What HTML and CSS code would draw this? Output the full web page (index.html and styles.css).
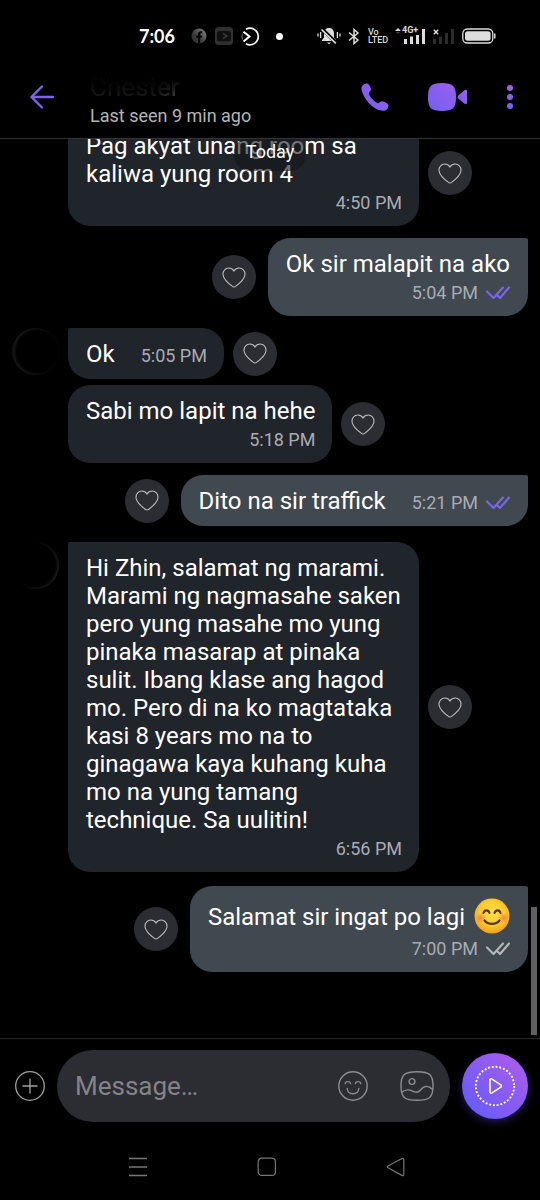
FILE: index.html
```html
<!DOCTYPE html>
<html lang="tl">
<head>
<meta charset="utf-8">
<meta name="viewport" content="width=device-width, initial-scale=1">
<title>Chat</title>
<link rel="stylesheet" href="styles.css">
</head>
<body>
<svg class="defs" aria-hidden="true">
  <defs>
    <linearGradient id="violet" x1="0" y1="1" x2="1" y2="0">
      <stop offset="0" stop-color="#7360f2"/><stop offset="1" stop-color="#9a5fea"/>
    </linearGradient>
    <linearGradient id="dots" gradientUnits="userSpaceOnUse" x1="0" y1="26" x2="0" y2="0">
      <stop offset="0" stop-color="#7360f2"/><stop offset="1" stop-color="#a062e0"/>
    </linearGradient>
    <linearGradient id="fade" x1="1" y1="0" x2="0" y2="1">
      <stop offset="0" stop-color="#8a8a8a"/><stop offset=".6" stop-color="#3c3c3c"/><stop offset="1" stop-color="#2c2c2c"/>
    </linearGradient>
    <radialGradient id="face" cx=".5" cy=".4" r=".6">
      <stop offset="0" stop-color="#ffe14a"/><stop offset=".6" stop-color="#fdc92f"/><stop offset="1" stop-color="#f0a11e"/>
    </radialGradient>
    <radialGradient id="cheek">
      <stop offset="0" stop-color="#f4764e" stop-opacity=".8"/><stop offset="1" stop-color="#f4764e" stop-opacity="0"/>
    </radialGradient>
    <symbol id="heart" viewBox="0 0 24 21">
      <path d="M12 20C10.600 20 1 12.800 1 7.200C1 3.700 3.500 1 6.700 1C9 1 11 2.200 12 4C13 2.200 15 1 17.300 1C20.500 1 23 3.700 23 7.200C23 12.800 13.400 20 12 20Z" fill="none" stroke="#b9bbbe" stroke-width="1.100"/>
    </symbol>
    <symbol id="ticks" viewBox="0 0 24 14">
      <path d="M1 5.500L7.500 12L17 1.500M11.500 9.500L14 12L23 1.500" fill="none" stroke="currentColor" stroke-width="2.100" stroke-linecap="round" stroke-linejoin="round"/>
    </symbol>
  </defs>
</svg>

<header class="header">
  <div class="status">
    <div class="status-left">
      <span class="clock">7:06</span>
      <svg width="16" height="16" viewBox="0 0 16 16"><circle cx="8" cy="8" r="7.500" fill="url(#fade)"/><path d="M7 15.500V9.800H5.200V7.600H7V6C7 4.200 8 3.200 9.800 3.200H11.200V5.200H10.200C9.400 5.200 9.200 5.600 9.200 6.300V7.600H11.200L10.900 9.800H9.200V15.500Z" fill="#080808"/></svg>
      <svg width="18" height="18" viewBox="0 0 18 18"><rect width="18" height="18" rx="4" fill="#303030"/><rect x="2" y="4" width="14" height="10.500" rx="3" fill="#101010"/><path d="M8 6.500L12 9L8 11.500" fill="none" stroke="#383838" stroke-width="1.500"/></svg>
      <svg width="19" height="19" viewBox="0 0 19 19" fill="none" stroke="#fff" stroke-width="1.700"><path d="M5 2.200A8.300 8.300 0 1 1 5 16.800"/><path d="M2.500 4.700L8.500 9.500L2.500 14.500" stroke-width="2"/><path d="M1.500 6.500A8.300 8.300 0 0 0 1.500 12.500" stroke="#777" stroke-width="1"/></svg>
      <span class="status-dot"></span>
    </div>
    <div class="status-right">
      <svg width="24" height="18" viewBox="0 0 24 18"><path d="M12 1C8.500 1 7 3.500 7 6.500V10.500L5 13V14H19V13L17 10.500V6.500C17 3.500 15.500 1 12 1Z" fill="#ddd"/><path d="M10 15.500H14L12 17.200Z" fill="#ddd"/><path d="M4 1L20 16.500" stroke="#000" stroke-width="3.500"/><path d="M4.500 2.500L18.800 16.300" stroke="#ddd" stroke-width="1.700"/><path d="M1 6.500V9.500M3.600 5V11M20.400 5V11M23 6.500V9.500" stroke="#ddd" stroke-width="1.300"/></svg>
      <svg width="12" height="17" viewBox="0 0 12 17"><path d="M1 4.500L10 12L6 15.500V1.500L10 5L1 12.500" fill="none" stroke="#ddd" stroke-width="1.500"/></svg>
      <span class="volte"><span>Vo</span><span>LTED</span></span>
      <span class="signal">
        <span class="network">4G+</span>
        <svg width="31" height="18" viewBox="0 0 31 18" fill="#ddd"><path d="M0 4L3 1L6 4Z"/><path d="M1 5H5L3 7Z" fill="#444"/><rect x="9" y="12" width="3" height="5"/><rect x="15" y="9.500" width="3" height="7.500"/><rect x="21" y="8" width="3" height="9"/><rect x="27" y="2" width="3" height="15"/></svg>
      </span>
      <svg width="22" height="18" viewBox="0 0 22 18"><path d="M.8 2.800L5.200 7.200M5.200 2.800L.8 7.200" stroke="#ddd" stroke-width="1.500"/><g fill="#2c2c2c"><rect x="0" y="12" width="3" height="5"/><rect x="6" y="9.500" width="3" height="7.500"/><rect x="12" y="6" width="3" height="11"/><rect x="18" y="2" width="3" height="15"/></g></svg>
      <svg width="34" height="16" viewBox="0 0 34 16"><rect x=".8" y="1" width="30" height="14" rx="4.500" fill="none" stroke="#ddd" stroke-width="1.300"/><rect x="3" y="3.200" width="25.600" height="9.600" rx="2.500" fill="#ddd"/><path d="M32.800 5.500V10.500" stroke="#ddd" stroke-width="1.400"/></svg>
    </div>
  </div>
  <div class="appbar">
    <button class="icon-button" aria-label="Back"><svg width="24" height="24" viewBox="0 0 24 24" fill="none" stroke="#7d63ea" stroke-width="2.400" stroke-linecap="round" stroke-linejoin="round"><path d="M23 12H1.500M12 1.500L1.500 12L12 22.500"/></svg></button>
    <div class="contact">
      <h1 class="contact-name">Chester</h1>
      <p class="contact-seen">Last seen 9 min ago</p>
    </div>
    <div class="actions">
      <button class="icon-button" aria-label="Voice call"><svg width="28" height="28" viewBox="0 0 28 28"><path d="M1.500 2.500C3 .8 5.500 0 7 .8C8.300 1.500 9.600 4.500 10 6.300C10.300 7.800 8 9.200 7.800 10.500C7.600 12.500 13.500 19.300 16.500 20.300C18 20.800 19.500 18.200 21 18.200C22.500 18.200 25.800 20 27 21.300C28.300 22.800 26.500 27 24 27.500C15 29.500 3 17.500 .6 7C.2 5.200 .4 3.700 1.500 2.500Z" fill="url(#violet)"/></svg></button>
      <button class="icon-button" aria-label="Video call"><svg width="40" height="28" viewBox="0 0 40 28" fill="url(#violet)"><path d="M14 0C25 0 28 3 28 14C28 25 25 28 14 28C3 28 0 25 0 14C0 3 3 0 14 0Z"/><path d="M30.500 12.300L36.500 7.300C38 6.300 39 7 39 8.500V19.500C39 21 38 21.700 36.500 20.700L30.500 15.700C29.400 14.700 29.400 13.300 30.500 12.300Z"/></svg></button>
      <button class="icon-button" aria-label="More options"><svg width="6" height="26" viewBox="0 0 6 26" fill="url(#dots)"><circle cx="3" cy="4" r="3"/><circle cx="3" cy="13" r="3"/><circle cx="3" cy="22" r="3"/></svg></button>
    </div>
  </div>
</header>

<main class="chat">
  <span class="day">Today</span>

  <div class="row in">
    <span class="slot"></span>
    <div class="bubble"><p>Pag akyat unang room sa kaliwa yung room 4</p><span class="meta">4:50 PM</span></div>
    <button class="like" aria-label="Like"><svg width="24" height="21"><use href="#heart"/></svg></button>
  </div>

  <div class="row out first">
    <button class="like" aria-label="Like"><svg width="24" height="21"><use href="#heart"/></svg></button>
    <div class="bubble"><p>Ok sir malapit na ako</p><span class="meta">5:04 PM <svg class="seen" width="24" height="14"><use href="#ticks"/></svg></span></div>
  </div>

  <div class="row in first">
    <span class="slot avatar"></span>
    <div class="bubble short"><p>Ok</p><span class="meta">5:05 PM</span></div>
    <button class="like" aria-label="Like"><svg width="24" height="21"><use href="#heart"/></svg></button>
  </div>

  <div class="row in">
    <span class="slot"></span>
    <div class="bubble"><p>Sabi mo lapit na hehe</p><span class="meta">5:18 PM</span></div>
    <button class="like" aria-label="Like"><svg width="24" height="21"><use href="#heart"/></svg></button>
  </div>

  <div class="row out first">
    <button class="like" aria-label="Like"><svg width="24" height="21"><use href="#heart"/></svg></button>
    <div class="bubble short"><p>Dito na sir traffick</p><span class="meta">5:21 PM <svg class="seen" width="24" height="14"><use href="#ticks"/></svg></span></div>
  </div>

  <div class="row in first long">
    <span class="slot avatar right-lit"></span>
    <div class="bubble"><p>Hi Zhin, salamat ng marami. Marami ng nagmasahe saken pero yung masahe mo yung pinaka masarap at pinaka sulit. Ibang klase ang hagod mo. Pero di na ko magtataka kasi 8 years mo na to ginagawa kaya kuhang kuha mo na yung tamang technique. Sa uulitin!</p><span class="meta">6:56 PM</span></div>
    <button class="like" aria-label="Like"><svg width="24" height="21"><use href="#heart"/></svg></button>
  </div>

  <div class="row out first">
    <button class="like" aria-label="Like"><svg width="24" height="21"><use href="#heart"/></svg></button>
    <div class="bubble"><p>Salamat sir ingat po lagi <svg class="emoji" role="img" aria-label="Smiling face" width="36" height="36" viewBox="0 0 36 36"><circle cx="18" cy="18" r="17.500" fill="url(#face)"/><circle cx="6.500" cy="20" r="5.500" fill="url(#cheek)"/><circle cx="29.500" cy="20" r="5.500" fill="url(#cheek)"/><g fill="none" stroke="#5b3a1c" stroke-width="2.200" stroke-linecap="round"><path d="M9.500 15C10.500 11.500 14.500 11.500 15.500 15M20.500 15C21.500 11.500 25.500 11.500 26.500 15"/><path d="M10.500 22.500C14 27 22 27 25.500 22.500"/></g></svg></p><span class="meta">7:00 PM <svg width="24" height="14"><use href="#ticks"/></svg></span></div>
  </div>

  <span class="scroll-thumb"></span>
</main>

<footer class="footer">
  <form class="composer">
    <button type="button" class="icon-button" aria-label="Add"><svg width="30" height="30" viewBox="0 0 30 30" fill="none" stroke="#a2a2a4" stroke-width="1.300"><circle cx="15" cy="15" r="14.300"/><path d="M15 7.500V22.500M7.500 15H22.500"/></svg></button>
    <div class="field">
      <input class="message" type="text" aria-label="Message" placeholder="Message…">
      <button type="button" class="icon-button" aria-label="Stickers"><svg width="30" height="30" viewBox="0 0 30 30" fill="none" stroke="#8b8d91" stroke-width="1.400" stroke-linecap="round"><circle cx="15" cy="15" r="14.200"/><path d="M7.200 12.500C7.800 10 12 10 12.600 12.500M17.400 12.500C18 10 22.200 10 22.800 12.500M9.200 17.500C10 24.500 20 24.500 20.800 17.500"/></svg></button>
      <button type="button" class="icon-button" aria-label="Gallery"><svg width="34" height="30" viewBox="0 0 34 30" fill="none" stroke="#8b8d91" stroke-width="1.400"><path d="M17 .8C29.500 .8 33 3.500 33 15C33 26.500 29.500 29.200 17 29.200C4.500 29.200 1 26.500 1 15C1 3.500 4.500 .8 17 .8Z"/><circle cx="12" cy="10.500" r="2.900"/><path d="M1.500 21.500C5 18.500 9 18.300 12.500 20.200C15.500 21.800 18 22 20.500 19C24 14.500 28.500 14 32.500 18.500"/></svg></button>
    </div>
    <button type="button" class="record" aria-label="Record video message"><svg width="42" height="42" viewBox="0 0 42 42" fill="none" stroke="#fff"><circle cx="21" cy="21" r="19.200" stroke-width="1.900" stroke-dasharray="1.900 1.870"/><path d="M16 15.200V26.800C16 28.200 17 28.500 18 27.900L26.800 22.200C27.700 21.500 27.700 20.500 26.800 19.800L18 14.100C17 13.500 16 13.800 16 15.200Z" stroke-width="1.600"/></svg></button>
  </form>
  <nav class="system-nav" aria-label="System">
    <button class="icon-button" aria-label="Recent apps"><svg width="20" height="20" viewBox="0 0 20 20" stroke="#777" stroke-width="1.300"><path d="M1 1.500H19M1 10H19M1 18.500H19"/></svg></button>
    <button class="icon-button" aria-label="Home"><svg width="20" height="20" viewBox="0 0 20 20" fill="none" stroke="#777" stroke-width="1.200"><rect x="1.200" y="1.200" width="17.200" height="17.200" rx="3.500"/></svg></button>
    <button class="icon-button" aria-label="Back"><svg width="20" height="20" viewBox="0 0 20 20" fill="none" stroke="#777" stroke-width="1.200" stroke-linejoin="round"><path d="M16 1.500L2 9C1.200 9.500 1.200 10.300 2 10.800L16 18.400C17 18.800 17.800 18.400 17.800 17.300V2.600C17.800 1.500 17 1.100 16 1.500Z"/></svg></button>
  </nav>
</footer>
</body>
</html>
```

FILE: styles.css
```css
* { box-sizing: border-box; }

body {
  margin: 0;
  height: 100vh;
  display: flex;
  flex-direction: column;
  background: #000;
  color: #fff;
  font-family: Roboto, "Noto Sans", sans-serif;
  overflow: hidden;
}

h1, p { margin: 0; font-weight: 400; }
svg { display: block; flex: none; }
button { border: 0; background: none; padding: 0; cursor: pointer; }
.defs { position: absolute; width: 0; height: 0; }
.icon-button { flex: none; }

/* Header */
.header { border-bottom: 1px solid #343436; }

.status {
  display: flex;
  align-items: center;
  justify-content: space-between;
  height: 60px;
  padding: 12px 44px 0 139px;
}
.status-left { display: flex; align-items: center; gap: 8px; }
.status-right { display: flex; align-items: center; gap: 7px; }
.clock {
  margin-right: 8px;
  font-family: Lato, Roboto, sans-serif;
  font-size: 18px;
  font-weight: 700;
  line-height: 20px;
}
.status-dot { width: 7px; height: 7px; margin-left: 8px; border-radius: 50%; background: #fff; }
.volte {
  display: flex;
  flex-direction: column;
  width: 20px;
  margin-left: 1px;
  color: #ddd;
  font-size: 9px;
  font-weight: 500;
  line-height: 8px;
}
.signal { position: relative; }
.network {
  position: absolute;
  top: -1px;
  left: 7px;
  color: #ddd;
  font-size: 9px;
  font-weight: 700;
  line-height: 9px;
}

.appbar {
  display: flex;
  align-items: center;
  padding: 4px 27px 8px 30px;
}
.contact { flex: 1; min-width: 0; margin-left: 36px; padding-top: 8px; }
.contact-name {
  width: max-content;
  font-size: 26px;
  line-height: 30px;
  color: transparent;
  background: linear-gradient(#000 30%, transparent 90%), linear-gradient(90deg, #1c1c1c 75%, #555);
  background-clip: text;
  -webkit-background-clip: text;
}
.contact-seen { font-size: 18px; line-height: 28px; color: #b4b4b4; }
.actions { display: flex; align-items: center; gap: 39px; }

/* Conversation */
.chat {
  position: relative;
  flex: 1;
  min-height: 0;
  display: flex;
  flex-direction: column;
  justify-content: flex-end;
  padding-bottom: 66px;
  overflow: hidden;
}
.day {
  position: absolute;
  z-index: 1;
  top: -2px;
  left: 50%;
  transform: translateX(-50%);
  padding: 2px 12px 6px;
  border-radius: 16px;
  background: rgba(20, 21, 24, 0.6);
  font-size: 18px;
  line-height: 26px;
}
.row { display: flex; flex: none; align-items: center; padding: 0 12px; margin-top: 6px; }
.row.in { gap: 9px; }
.row.out { gap: 12px; justify-content: flex-end; }
.row.first { margin-top: 12px; }
.row.long { margin: 16px 0 2px; }

.slot { flex: none; width: 47px; height: 47px; }
.avatar {
  align-self: flex-start;
  border-radius: 50%;
  background: radial-gradient(circle at 54% 50%, #000 60%, #181715 70%, #000 76%);
}
.right-lit { background: radial-gradient(circle at 45% 48%, #000 62%, #1a1a1a 72%, #000 78%); }

.bubble {
  display: flex;
  flex-direction: column;
  max-width: 351px;
  padding: 12px 18px 13px;
  border-radius: 22px;
  background: #20242b;
  font-size: 24px;
  line-height: 28px;
}
.out .bubble { background: #404850; }
.in .bubble { padding-right: 17px; }
.in.first .bubble { border-top-left-radius: 2px; }
.out.first .bubble { border-top-right-radius: 2px; }
.meta {
  display: flex;
  align-items: center;
  align-self: flex-end;
  gap: 8px;
  margin-top: 5px;
  color: #a9acb3;
  font-size: 18px;
  line-height: 20px;
  white-space: nowrap;
}
.bubble.short { flex-direction: row; align-items: baseline; gap: 26px; padding-bottom: 11px; }
.short .meta { align-self: auto; margin-top: 0; }
.meta svg { color: #b4b7bc; }
.meta .seen { color: #7965ee; }
.emoji { display: inline-block; margin-left: 3px; vertical-align: -9px; }

.like {
  display: grid;
  place-items: center;
  flex: none;
  width: 44px;
  height: 44px;
  border-radius: 50%;
  background: #2b2d32;
}
.scroll-thumb {
  position: absolute;
  right: 3px;
  bottom: 3px;
  width: 6px;
  height: 128px;
  background: #606060;
}

/* Composer */
.footer { border-top: 1px solid #242426; }
.composer { display: flex; align-items: center; gap: 12px; padding: 11px 12px 11px 15px; }
.field {
  display: flex;
  flex: 1;
  align-items: center;
  gap: 32px;
  min-width: 0;
  height: 72px;
  padding: 0 16px 0 18px;
  border-radius: 36px;
  background: #2b2d32;
}
.message {
  flex: 1;
  min-width: 0;
  padding: 0;
  border: 0;
  outline: 0;
  background: none;
  color: #fff;
  font: 26px/32px Roboto, "Noto Sans", sans-serif;
}
.message::placeholder { color: #838388; opacity: 1; }
.record {
  display: grid;
  place-items: center;
  flex: none;
  width: 66px;
  height: 66px;
  border-radius: 50%;
  background: linear-gradient(45deg, #6a5cf8 15%, #a55cec 85%);
  box-shadow: 0 3px 8px rgba(90, 60, 220, 0.4);
}

.system-nav {
  display: flex;
  justify-content: center;
  gap: 109px;
  padding: 24px 6px 23px 0;
}
```
